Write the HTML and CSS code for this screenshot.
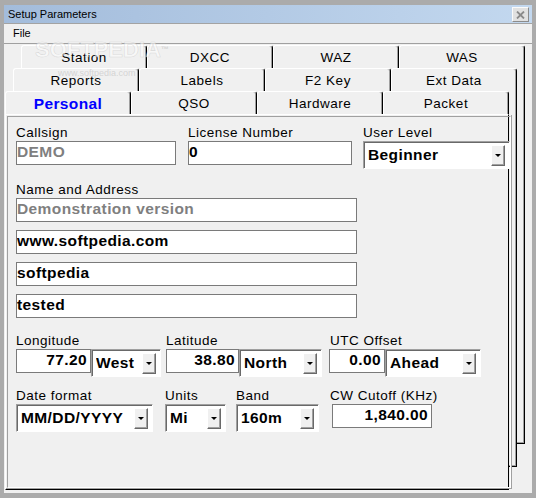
FILE: index.html
```html
<!DOCTYPE html>
<html>
<head>
<meta charset="utf-8">
<title>Setup Parameters</title>
<link rel="stylesheet" href="styles.css">
</head>
<body>
<div class="window">
  <div class="wm" aria-hidden="true">SOFTPEDIA<span class="tm">™</span></div>
  <div class="wm-url" aria-hidden="true">www.softpedia.com</div>
  <div class="titlebar">
    <span class="title">Setup Parameters</span>
    <span class="close"><svg width="9" height="8" viewBox="0 0 9 8"><path d="M1 0.5 L8 7.5 M8 0.5 L1 7.5" stroke="#8a8a8a" stroke-width="1.8" fill="none"/></svg></span>
  </div>
  <div class="menubar"><span class="menu-item">File</span></div>
  <div class="client">
    <div class="tabctl">
      <div class="layer l3">
        <div class="tabrow">
          <div class="tab">Station</div><div class="tab">DXCC</div><div class="tab">WAZ</div><div class="tab">WAS</div>
        </div>
        <div class="sheet"><div class="sheet-in"></div></div>
      </div>
      <div class="layer l2">
        <div class="tabrow">
          <div class="tab">Reports</div><div class="tab">Labels</div><div class="tab">F2 Key</div><div class="tab">Ext Data</div>
        </div>
        <div class="sheet"><div class="sheet-in"></div></div>
      </div>
      <div class="layer l1">
        <div class="tabrow">
          <div class="tab sel">Personal</div><div class="tab">QSO</div><div class="tab">Hardware</div><div class="tab">Packet</div>
        </div>
        <div class="sheet front">
          <div class="sheet-in">
            <div class="page">
              <div class="row row-a">
                <div class="col c-call">
                  <div class="lbl">Callsign</div>
                  <div class="tb dim">DEMO</div>
                </div>
                <div class="col c-lic">
                  <div class="lbl">License Number</div>
                  <div class="tb">0</div>
                </div>
                <div class="col c-lvl">
                  <div class="lbl">User Level</div>
                  <div class="combo w-lvl"><span class="ct">Beginner</span><span class="dd"></span></div>
                </div>
              </div>

              <div class="row-b">
                <div class="lbl">Name and Address</div>
                <div class="stack">
                  <div class="tb addr dim">Demonstration version</div>
                  <div class="tb addr">www.softpedia.com</div>
                  <div class="tb addr">softpedia</div>
                  <div class="tb addr">tested</div>
                </div>
              </div>

              <div class="row row-c">
                <div class="col c-lon">
                  <div class="lbl">Longitude</div>
                  <div class="pair">
                    <div class="tb num w-lon">77.20</div>
                    <div class="combo w-ew"><span class="ct">West</span><span class="dd"></span></div>
                  </div>
                </div>
                <div class="col c-lat">
                  <div class="lbl">Latitude</div>
                  <div class="pair">
                    <div class="tb num w-lat">38.80</div>
                    <div class="combo w-ns"><span class="ct">North</span><span class="dd"></span></div>
                  </div>
                </div>
                <div class="col c-utc">
                  <div class="lbl lbl-utc">UTC Offset</div>
                  <div class="pair">
                    <div class="tb num w-utc">0.00</div>
                    <div class="combo w-ahead"><span class="ct">Ahead</span><span class="dd"></span></div>
                  </div>
                </div>
              </div>

              <div class="row row-d">
                <div class="col c-date">
                  <div class="lbl">Date format</div>
                  <div class="combo w-date"><span class="ct">MM/DD/YYYY</span><span class="dd"></span></div>
                </div>
                <div class="col c-units">
                  <div class="lbl">Units</div>
                  <div class="combo w-units"><span class="ct">Mi</span><span class="dd"></span></div>
                </div>
                <div class="col c-band">
                  <div class="lbl">Band</div>
                  <div class="combo w-band"><span class="ct">160m</span><span class="dd"></span></div>
                </div>
                <div class="col c-cw">
                  <div class="lbl">CW Cutoff (KHz)</div>
                  <div class="tb num w-cw">1,840.00</div>
                </div>
              </div>
            </div>
          </div>
        </div>
      </div>
    </div>
  </div>
</div>
</body>
</html>
```

FILE: styles.css
```css
* { box-sizing: border-box; margin: 0; padding: 0; }
html, body { width: 536px; height: 498px; overflow: hidden; }
body { font-family: "Liberation Sans", Arial, sans-serif; color: #000; background: #ababab; }

.window {
  position: relative;
  width: 536px; height: 498px;
  padding: 5px 4px 5px 4px;
  background: #ababab;
  display: flex; flex-direction: column;
}

.wm {
  position: absolute; left: 35px; top: 39px; z-index: 2;
  font-weight: bold; font-size: 22px; line-height: 22px;
  color: rgba(255,255,255,0.55);
  -webkit-text-stroke: 0.6px rgba(185,185,185,0.45);
  pointer-events: none;
}
.tm { font-size: 8px; vertical-align: top; -webkit-text-stroke: 0; color: rgba(190,190,190,0.6); }
.wm-url {
  position: absolute; left: 58px; top: 68px; z-index: 2;
  font-size: 9px; line-height: 10px;
  color: rgba(175,175,175,0.45);
  pointer-events: none;
}

.titlebar {
  height: 19px; flex: none;
  display: flex;
  border-bottom: 1px solid #a3a3a3;
  background: linear-gradient(to right, #a3bcdb, #c3d8ef);
  padding-left: 4px;
  font-size: 11px; line-height: 18px;
}
.title { flex: 1; }
.close {
  width: 17px; height: 15px;
  margin: 2px 3px 0 0;
  background: #e1e1e1;
  border: 1px solid; border-color: #fafafa #8c8c8c #8c8c8c #fafafa;
  display: flex; align-items: center; justify-content: center;
}

.menubar {
  height: 20px; flex: none;
  border-bottom: 1px solid #a0a0a0;
  background: #f0f0f0;
  padding-left: 9px;
  font-size: 11px; line-height: 19px;
}

.client { flex: 1; background: #f0f0f0; }

.tabctl { display: grid; }
.layer { grid-area: 1 / 1; width: 504px; height: 399px; display: flex; flex-direction: column; }
.l3 { margin: 1px 0 0 17px; }
.l2 { margin: 24px 0 0 9px; }
.l1 { margin: 47px 0 0 1px; }

.tabrow { display: flex; height: 23px; flex: none; }
.tab {
  flex: 1; min-width: 0;
  background: #f0f0f0;
  border-top: 1px solid #fff; border-left: 1px solid #fff; border-right: 1px solid #000;
  border-radius: 3px 3px 0 0;
  box-shadow: inset -1px 0 #a0a0a0;
  text-align: center;
  font-size: 13.5px; letter-spacing: 0.5px;
  line-height: 21px; padding-top: 1px;
  white-space: nowrap;
}
.tab.sel { color: #0000ff; font-weight: bold; font-size: 15.5px; letter-spacing: 0.4px; }

.sheet {
  flex: 1; display: flex;
  background: #f0f0f0;
  border-left: 1px solid #fff; border-right: 1px solid #000; border-bottom: 1px solid #000;
}
.sheet.front { border-top: 1px solid #fff; }
.sheet-in {
  flex: 1; display: flex;
  padding: 1px 0 0 1px;
  border-right: 1px solid #a0a0a0; border-bottom: 1px solid #a0a0a0;
}
.page {
  flex: 1; min-width: 0; overflow: hidden;
  border: 1px solid; border-color: #a0a0a0 #fff #fff #a0a0a0;
  padding: 8px 0 0 8px;
}

.lbl { height: 16px; line-height: 16px; font-size: 13.5px; letter-spacing: 0.5px; white-space: nowrap; }
.lbl-utc { padding-left: 1px; }

.row { display: flex; align-items: flex-start; }
.col { display: flex; flex-direction: column; flex: none; }
.pair { display: flex; }

.tb {
  height: 24px;
  border: 1px solid #7a7a7a;
  background: #fff;
  font-weight: bold; font-size: 15.5px; letter-spacing: 0.4px;
  line-height: 19px;
  white-space: nowrap; overflow: hidden;
}
.tb.num { text-align: right; padding-right: 3px; }
.tb.dim { color: #7f7f7f; }

.combo {
  height: 28px;
  display: flex; align-items: center;
  background: #fff;
  border: 1px solid; border-color: #a0a0a0 #fff #fff #a0a0a0;
  box-shadow: inset 1px 1px #696969;
  padding: 0 4px 0 4px;
  flex: none;
}
.ct {
  flex: 1; min-width: 0;
  font-weight: bold; font-size: 15.5px; letter-spacing: 0.4px;
  line-height: 24px;
  white-space: nowrap; overflow: hidden;
}
.dd {
  flex: none;
  width: 14px; height: 21px;
  background: #f0f0f0;
  border: 1px solid; border-color: #fff #696969 #696969 #fff;
  box-shadow: inset -1px -1px #a0a0a0;
  display: flex; align-items: center; justify-content: center;
}
.dd::after {
  content: "";
  border-left: 3px solid transparent; border-right: 3px solid transparent;
  border-top: 3px solid #000;
}

/* Row A */
.c-call { width: 160px; }
.c-lic { width: 164px; margin-left: 12px; }
.c-lvl { margin-left: 11px; }
.w-lvl { width: 147px; }

/* Row B */
.row-b { margin-top: 13px; }
.stack { display: flex; flex-direction: column; gap: 8px; }
.addr { width: 341px; }

/* Row C */
.row-c { margin-top: 15px; }
.c-lat { margin-left: 5px; }
.c-utc { margin-left: 7px; }
.w-lon { width: 75px; }
.w-ew { width: 70px; }
.w-lat { width: 73px; }
.w-ns { width: 83px; }
.w-utc { width: 56px; }
.w-ahead { width: 96px; }

/* Row D */
.row-d { margin-top: 11px; }
.c-units { margin-left: 12px; }
.c-band { margin-left: 10px; }
.c-cw { margin-left: 11px; }
.w-date { width: 137px; }
.w-units { width: 61px; }
.w-band { width: 83px; }
.w-cw { width: 100px; margin-left: 2px; }
```
